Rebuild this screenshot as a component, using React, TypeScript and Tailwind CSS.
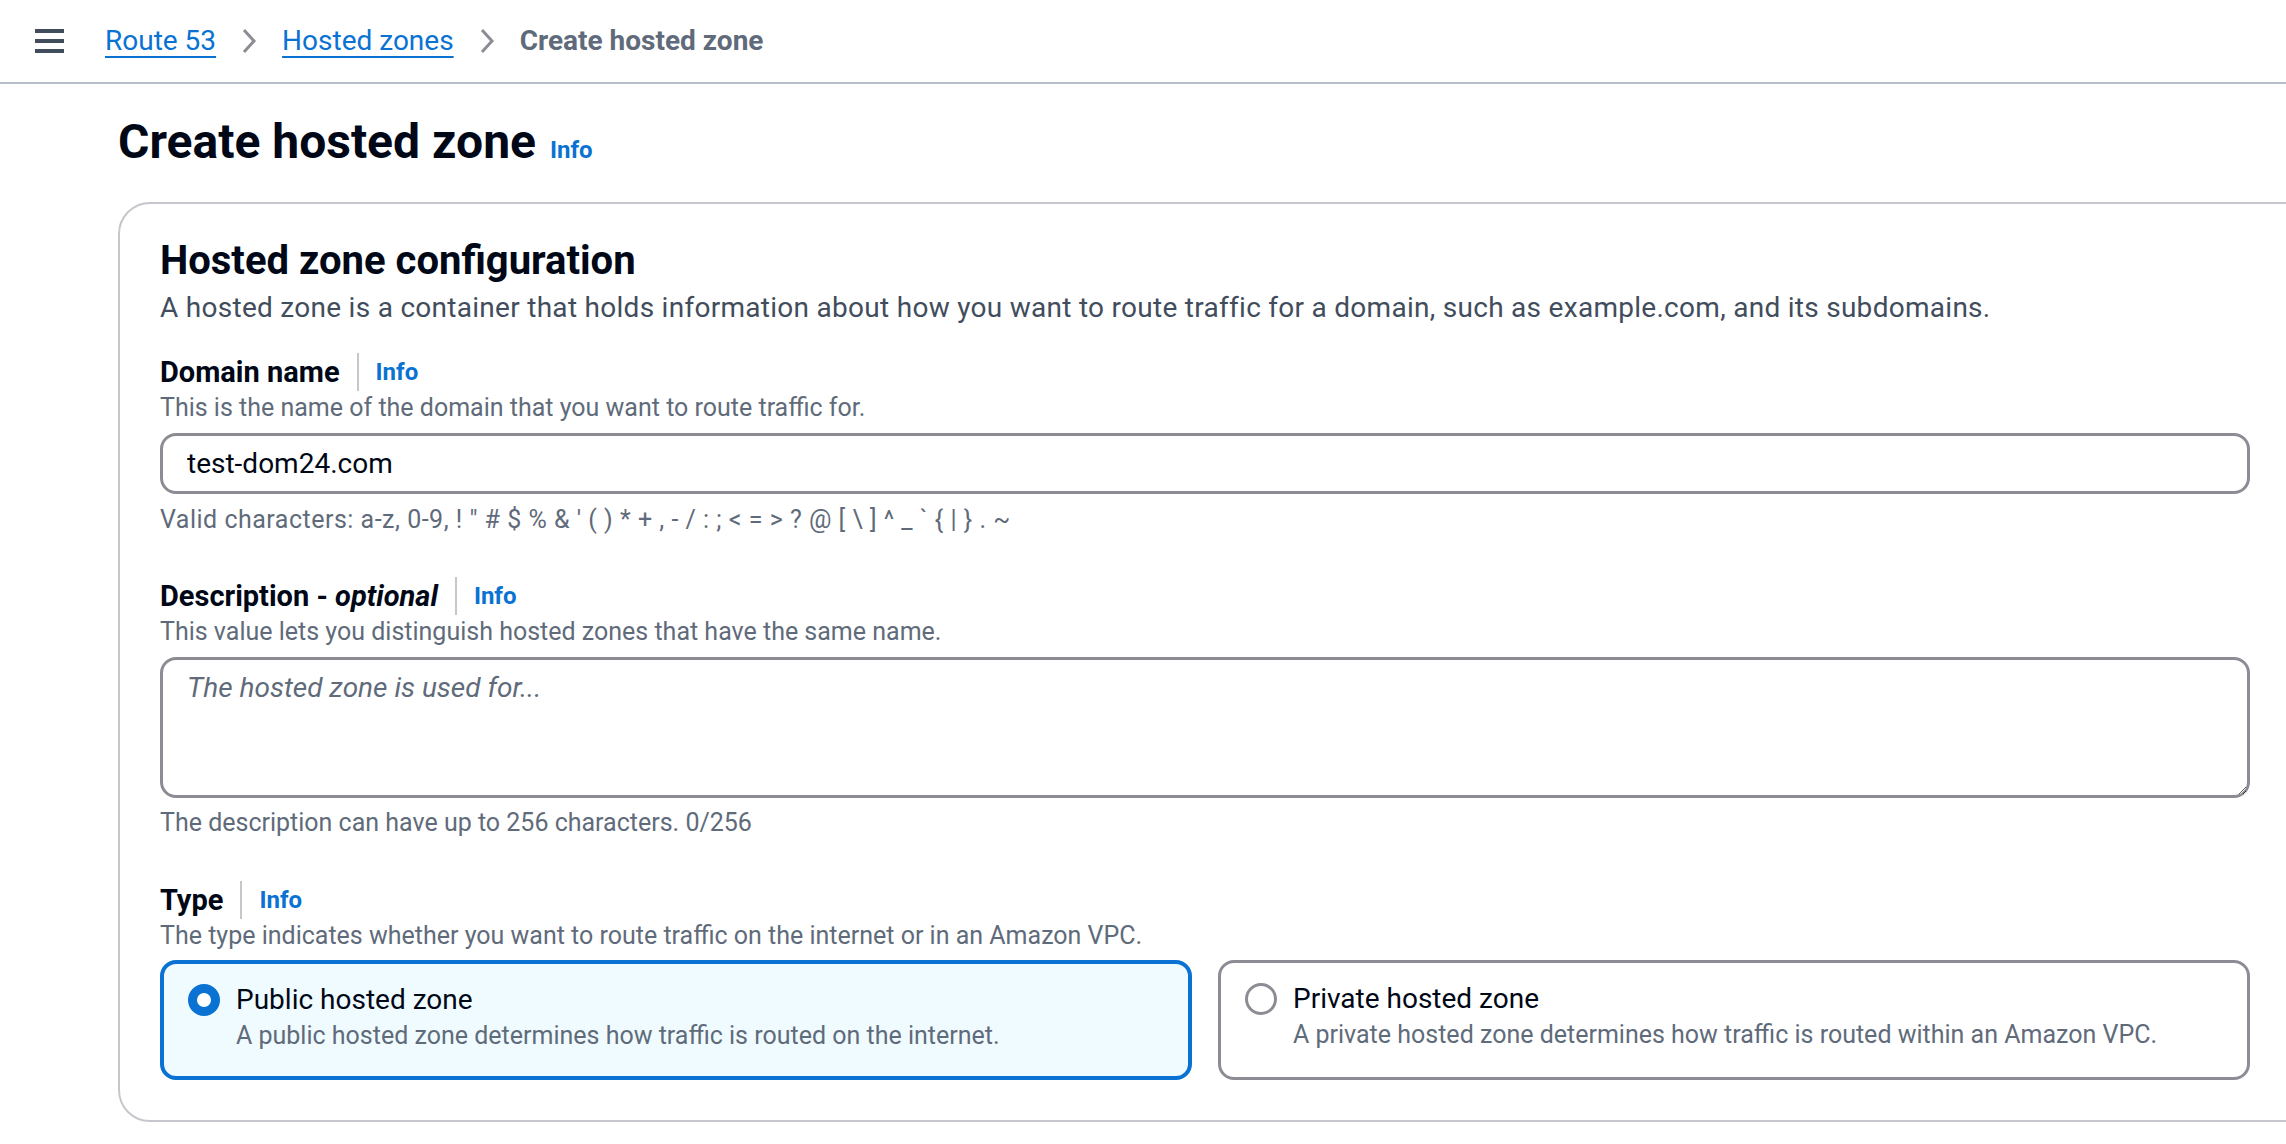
import React from 'react';

const LINK = 'text-[#0972d3]';

const Chevron = () => (
  <svg width="16" height="26" viewBox="0 0 16 26" className="mx-[25px]" fill="none">
    <path d="M3 2l10 11L3 24" stroke="#8c8c94" strokeWidth="3" strokeLinejoin="miter" />
  </svg>
);

const FieldLabel = ({ children }: { children: React.ReactNode }) => (
  <div className="flex items-center h-[40px]">
    <span className="text-[29px] leading-[40px] font-bold text-[#000716]">{children}</span>
    <span className="ml-[17px] mr-[17px] h-[38px] w-[2px] bg-[#c6c6cd]" />
    <a className={`${LINK} text-[24px] font-bold leading-[40px]`}>Info</a>
  </div>
);

const Hint = ({ children }: { children: React.ReactNode }) => (
  <p className="text-[25px] leading-[32px] text-[#5f6b7a]">{children}</p>
);

const Tile = ({ title, desc, selected }: { title: string; desc: string; selected?: boolean }) => (
  <div
    className={`flex gap-[16px] rounded-[16px] pl-[24px] pt-[16px] pb-[24px] ${
      selected ? 'border-[4px] border-[#0972d3] bg-[#f0fbff]' : 'border-[3px] border-[#8c8c94] bg-white'
    }`}
  >
    <div className="h-[40px] flex items-center">
      {selected ? (
        <span className="block w-[32px] h-[32px] rounded-full border-[9px] border-[#0972d3] bg-white" />
      ) : (
        <span className="block w-[32px] h-[32px] rounded-full border-[3px] border-[#8c8c94] bg-white" />
      )}
    </div>
    <div>
      <div className="text-[28px] leading-[40px] text-[#000716]">{title}</div>
      <div className="text-[25px] leading-[32px] text-[#5f6b7a]">{desc}</div>
    </div>
  </div>
);

export default function App() {
  return (
    <div className="min-h-screen bg-white text-[#000716] font-['Roboto','Liberation_Sans',sans-serif] overflow-hidden">
      {/* Breadcrumb bar */}
      <header className="h-[84px] border-b-2 border-[#b6bec9] flex items-center pl-[35px]">
        <svg width="29" height="24" viewBox="0 0 29 24">
          <rect x="0" y="0" width="29" height="4" fill="#414d5c" />
          <rect x="0" y="10" width="29" height="4" fill="#414d5c" />
          <rect x="0" y="20" width="29" height="4" fill="#414d5c" />
        </svg>
        <nav className="ml-[41px] flex items-center text-[28px] leading-[40px]">
          <a className={`${LINK} underline decoration-2 underline-offset-[6px]`}>Route 53</a>
          <Chevron />
          <a className={`${LINK} underline decoration-2 underline-offset-[6px]`}>Hosted zones</a>
          <Chevron />
          <span className="font-bold text-[#5f6b7a]">Create hosted zone</span>
        </nav>
      </header>

      <main className="pl-[118px]">
        <div className="pt-[30px] flex items-baseline">
          <h1 className="text-[48px] leading-[56px] font-bold text-[#000716]">Create hosted zone</h1>
          <a className={`${LINK} ml-[14px] text-[24px] font-bold`}>Info</a>
        </div>

        <section className="mt-[32px] mr-[-40px] border-2 border-[#c6c6cd] rounded-[32px] pl-[40px] pr-[74px] pt-[33px] pb-[40px]">
          <h2 className="text-[40px] leading-[48px] font-bold">Hosted zone configuration</h2>
          <p className="mt-[3px] text-[28px] leading-[40px] tracking-[0.01em] text-[#414d5c]">
            A hosted zone is a container that holds information about how you want to route traffic for a domain, such as example.com, and its subdomains.
          </p>

          <div className="mt-[24px]">
            <FieldLabel>Domain name</FieldLabel>
            <Hint>This is the name of the domain that you want to route traffic for.</Hint>
            <input
              defaultValue="test-dom24.com"
              className="mt-[9px] block w-full h-[61px] border-[3px] border-[#8c8c94] rounded-[16px] pl-[24px] text-[28px] text-[#000716] outline-none"
            />
            <div className="mt-[10px]">
              <Hint>
                <span className="tracking-[0.02em]">
                  Valid characters: a-z, 0-9, ! " # $ % &amp; ' ( ) * + , - / : ; &lt; = &gt; ? @ [ \ ] ^ _ ` {'{'} | {'}'} . ~
                </span>
              </Hint>
            </div>
          </div>

          <div className="mt-[40px]">
            <FieldLabel>
              Description - <i>optional</i>
            </FieldLabel>
            <Hint>This value lets you distinguish hosted zones that have the same name.</Hint>
            <textarea
              placeholder="The hosted zone is used for..."
              className="mt-[9px] block w-full h-[141px] border-[3px] border-[#8c8c94] rounded-[16px] pl-[24px] pt-[8px] text-[28px] leading-[40px] outline-none placeholder:italic placeholder:text-[#5f6b7a]"
            />
            <div className="mt-[9px]">
              <Hint>The description can have up to 256 characters. 0/256</Hint>
            </div>
          </div>

          <div className="mt-[41px]">
            <FieldLabel>Type</FieldLabel>
            <Hint>The type indicates whether you want to route traffic on the internet or in an Amazon VPC.</Hint>
            <div className="mt-[8px] grid grid-cols-2 gap-[26px]">
              <Tile selected title="Public hosted zone" desc="A public hosted zone determines how traffic is routed on the internet." />
              <Tile title="Private hosted zone" desc="A private hosted zone determines how traffic is routed within an Amazon VPC." />
            </div>
          </div>
        </section>
      </main>
    </div>
  );
}
